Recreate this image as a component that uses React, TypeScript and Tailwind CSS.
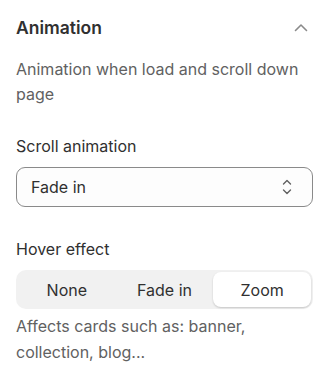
import React, { useState } from 'react';
import clsx from 'clsx';

const options = ['None', 'Fade in', 'Zoom'];

export default function App() {
  const [hover, setHover] = useState('Zoom');

  return (
    <div className="min-h-screen w-[329px] bg-white px-4 pt-[16px] text-[#303030] font-['Inter',sans-serif]">
      <div className="flex items-center justify-between">
        <h2 className="text-[17.5px] font-semibold leading-[24px]">Animation</h2>
        <svg className="mr-[5px] h-[14px] w-[14px] text-[#8a8a8a]" viewBox="0 0 14 14" fill="none">
          <path d="M1.5 9.5 7 4l5.5 5.5" stroke="currentColor" strokeWidth="1.6" strokeLinecap="round" strokeLinejoin="round" />
        </svg>
      </div>

      <p className="mt-[17px] text-[16px] leading-[25px] text-[#616161]">
        Animation when load and scroll down page
      </p>

      <label className="mt-[27px] block text-[16px] leading-[24px]">Scroll animation</label>
      <div className="mt-[9px] flex h-[40px] items-center justify-between rounded-[9px] border border-[#8a8a8a] bg-[#fdfdfd] pl-[14px] pr-[20px]">
        <span className="text-[16px]">Fade in</span>
        <svg className="h-[18px] w-[10px] text-[#616161]" viewBox="0 0 10 18" fill="none">
          <path d="M1.5 6 5 2.5 8.5 6M1.5 12 5 15.5 8.5 12" stroke="currentColor" strokeWidth="1.4" strokeLinecap="round" strokeLinejoin="round" />
        </svg>
      </div>

      <label className="mt-[30px] block text-[16px] leading-[24px]">Hover effect</label>
      <div className="mt-[9px] grid h-[39px] grid-cols-3 rounded-[10px] bg-[#f1f1f1] p-[2px]">
        {options.map((o) => (
          <button
            key={o}
            onClick={() => setHover(o)}
            className={clsx(
              'rounded-[8px] text-[16px]',
              hover === o && 'bg-white shadow-[0_1px_2px_rgba(0,0,0,0.18)]'
            )}
          >
            {o}
          </button>
        ))}
      </div>

      <p className="mt-[4px] text-[16px] leading-[26px] text-[#616161]">
        Affects cards such as: banner, collection, blog...
      </p>
    </div>
  );
}
